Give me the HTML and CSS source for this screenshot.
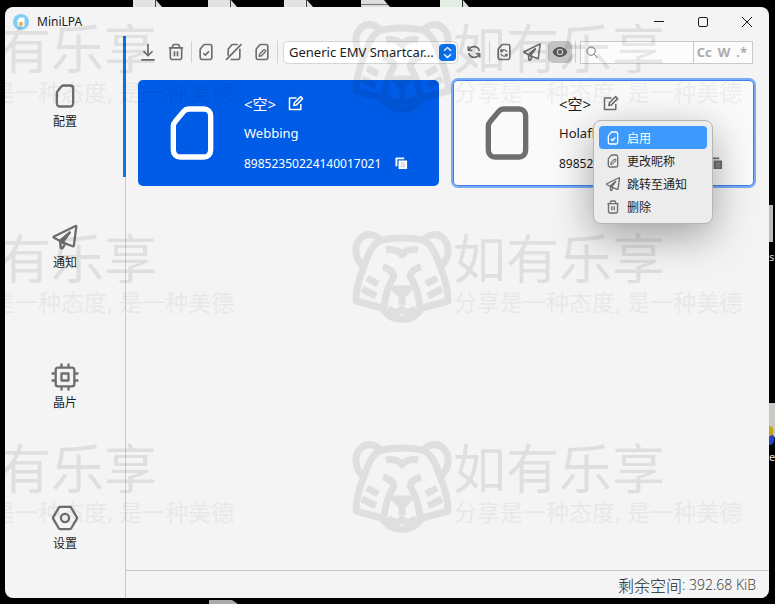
FILE: index.html
```html
<!DOCTYPE html>
<html lang="zh-CN">
<head>
<meta charset="utf-8">
<title>MiniLPA</title>
<link rel="stylesheet" href="styles.css">
</head>
<body>
<svg class="sprite" aria-hidden="true">
  <defs>
    <symbol id="sim" viewBox="0 0 24 24"><path d="M10.600 3H16.500A2.500 2.500 0 0 1 19 5.500V18.500A2.500 2.500 0 0 1 16.500 21H7.500A2.500 2.500 0 0 1 5 18.500V9.400A2.500 2.500 0 0 1 5.700 7.700L8.900 3.900A2.500 2.500 0 0 1 10.600 3Z"/></symbol>
    <symbol id="sim-check" viewBox="0 0 24 24"><use href="#sim"/><path d="M8.800 13.500L11.200 15.800L15.500 11.200"/></symbol>
    <symbol id="sim-off" viewBox="0 0 24 24"><path d="M16.500 3H10.600A2.500 2.500 0 0 0 8.900 3.900L5.700 7.700A2.500 2.500 0 0 0 5 9.400V16.500M8 21H16.500A2.500 2.500 0 0 0 19 18.500V8M2.500 21.500L21 2.500"/></symbol>
    <symbol id="sim-edit" viewBox="0 0 24 24"><use href="#sim"/><path d="M8.500 17.300L9.200 14.300L14 9.500A1.500 1.500 0 0 1 16.100 11.600L11.300 16.500Z" stroke-width="1.600"/></symbol>
    <symbol id="sim-sync" viewBox="0 0 24 24"><use href="#sim"/><path d="M8.300 8.800V11.400H11M8.600 11.200A3.800 3.800 0 0 1 15.500 12M15.700 17.500V14.900H13M15.400 15.100A3.800 3.800 0 0 1 8.500 14.300" stroke-width="1.600"/></symbol>
    <symbol id="sync" viewBox="0 0 24 24"><path d="M3.500 3.500V9.500H9.500M4.200 9.200A8.300 8.300 0 0 1 20 10.500M20.500 20.500V14.500H14.500M19.800 14.800A8.300 8.300 0 0 1 4 13.500" stroke-width="2.600"/></symbol>
    <symbol id="download" viewBox="0 0 24 24"><path d="M12 2V16.500M6.500 11L12 16.500L17.500 11M4 21.500H20"/></symbol>
    <symbol id="trash" viewBox="0 0 24 24"><path d="M3.500 7H20.500M8 6.500V5A2 2 0 0 1 10 3H14A2 2 0 0 1 16 5V6.500M5.200 7V18.500A2.500 2.500 0 0 0 7.700 21H16.300A2.500 2.500 0 0 0 18.800 18.500V7M10.200 11V17M13.800 11V17"/></symbol>
    <symbol id="plane" viewBox="0 0 24 24"><path d="M21 2.600Q21.800 2.200 21.700 3.100L19.600 19.200Q19.400 20.200 18.500 19.900L9.800 16.600L16 8.200L7.800 15.400L2.600 12.700Q1.800 12.100 2.600 11.600Z"/><path d="M7.800 15.400L8.300 21.200Q9.600 22.600 10.600 20.600L12.300 17.500L9.800 16.600L16 8.200Z"/></symbol>
    <symbol id="chip" viewBox="0 0 24 24"><rect x="4" y="4" width="16" height="16" rx="2"/><rect x="9" y="9" width="6" height="6"/><path d="M9 0.500V4M15 0.500V4M9 20V23.500M15 20V23.500M0.500 9H4M0.500 15H4M20 9H23.500M20 15H23.500"/></symbol>
    <symbol id="hex" viewBox="0 0 24 24"><path d="M7.600 2.500H16.400A1 1 0 0 1 17.200 3L22.200 11.500Q22.500 12 22.200 12.500L17.200 21A1 1 0 0 1 16.400 21.500H7.600A1 1 0 0 1 6.800 21L1.800 12.500Q1.500 12 1.800 11.500L6.800 3A1 1 0 0 1 7.600 2.500Z"/><circle cx="12" cy="12" r="3.500"/></symbol>
    <symbol id="edit" viewBox="0 0 16 16"><path d="M8.500 3H1.500V14.500H12.800V9M5.800 10.500L6.400 7.800L12.600 1.600L14.600 3.600L8.400 9.900Z"/></symbol>
    <symbol id="copy" viewBox="0 0 14 14"><path d="M1.500 10V1.500H10" fill="none" stroke-width="2"/><path d="M3.800 3.800H13V13H3.800Z" stroke="none" fill="currentColor"/><path d="M6 6.500H11M6 8.500H11M6 10.500H11" stroke="#aaa" stroke-opacity="0.700" stroke-width="1"/></symbol>
    <symbol id="eye" viewBox="0 0 24 24"><path fill="currentColor" stroke="none" fill-rule="evenodd" d="M12 4.500C6.500 4.500 2.500 8 1 12C2.500 16 6.500 19.500 12 19.500S21.500 16 23 12C21.500 8 17.500 4.500 12 4.500ZM12 17A5 5 0 1 1 12 7A5 5 0 0 1 12 17ZM12 15A3 3 0 1 0 12 9A3 3 0 0 0 12 15Z"/></symbol>
    <symbol id="search" viewBox="0 0 14 14"><circle cx="5.500" cy="5.500" r="4.500"/><path d="M9 9L12.500 13"/></symbol>
    <symbol id="tiger" viewBox="0 0 100 92">
      <path d="M27 10C40 6 60 6 73 10C83 17 85 28 89 38C94 50 96 60 96 70L70 77C61 92 39 92 30 77L4 70C4 60 6 50 11 38C15 28 17 17 27 10ZM13 36C2 30 2 14 8 8C14 1 24 3 29 10M87 36C98 30 98 14 92 8C86 1 76 3 71 10M34 19Q45 17 50 24Q55 17 66 19M31 36Q40 38 42 45Q33 60 32 77M69 36Q60 38 58 45Q67 60 68 77M15 47L26 53M10 58L24 65M85 47L74 53M90 58L76 65M43 58H57L50 65ZM50 65V74M36 77Q45 85 50 78Q55 85 64 77" stroke-width="7"/>
    </symbol>
  </defs>
</svg>

<div class="desktop" aria-hidden="true">
  <i class="file f1"></i><i class="file f2"></i><i class="file f3"></i><i class="file f4"></i><i class="file f5"></i><i class="file f6"></i>
  <i class="edge-file"></i><i class="edge-app"></i>
  <span class="desk-label l1">s</span><span class="desk-label l2">e.</span>
</div>

<div class="window">
  <header class="titlebar">
    <svg class="logo" viewBox="0 0 16 16" aria-hidden="true"><circle cx="8" cy="8" r="8" fill="#86cdf2"/><path d="M7 3.500H10.500A1 1 0 0 1 11.500 4.500V11.500A1 1 0 0 1 10.500 12.500H5.500A1 1 0 0 1 4.500 11.500V6Z" fill="#fff"/><rect x="6" y="8" width="4" height="3.500" fill="#e8bd62"/></svg>
    <h1>MiniLPA</h1>
    <div class="caption">
      <button aria-label="最小化"><svg viewBox="0 0 12 12"><path d="M1 5.500H11"/></svg></button>
      <button aria-label="最大化"><svg viewBox="0 0 12 12"><rect x="1.500" y="1.500" width="9" height="9" rx="1.500"/></svg></button>
      <button aria-label="关闭"><svg viewBox="0 0 12 12"><path d="M1 1L11 11M11 1L1 11"/></svg></button>
    </div>
  </header>

  <div class="body">
    <nav class="sidebar">
      <button class="tab selected"><svg><use href="#sim"/></svg>配置</button>
      <button class="tab"><svg><use href="#plane"/></svg>通知</button>
      <button class="tab"><svg><use href="#chip"/></svg>晶片</button>
      <button class="tab"><svg><use href="#hex"/></svg>设置</button>
    </nav>

    <main>
      <div class="toolbar">
        <button class="tool" aria-label="下载"><svg><use href="#download"/></svg></button>
        <button class="tool" aria-label="删除"><svg><use href="#trash"/></svg></button>
        <span class="sep"></span>
        <button class="tool" aria-label="启用"><svg><use href="#sim-check"/></svg></button>
        <button class="tool" aria-label="禁用"><svg><use href="#sim-off"/></svg></button>
        <button class="tool" aria-label="更改昵称"><svg><use href="#sim-edit"/></svg></button>
        <span class="sep"></span>
        <div class="picker">
          <select aria-label="读卡器"><option>Generic EMV Smartcar...</option></select>
          <svg viewBox="0 0 17 17" aria-hidden="true"><rect width="17" height="17" rx="4" fill="#0a76f2"/><path d="M5 6.800L8.500 3.500L12 6.800M5 10.200L8.500 13.500L12 10.200" fill="none" stroke="#fff" stroke-width="1.500"/></svg>
        </div>
        <button class="tool" aria-label="刷新"><svg class="small"><use href="#sync"/></svg></button>
        <span class="sep"></span>
        <button class="tool" aria-label="刷新配置"><svg><use href="#sim-sync"/></svg></button>
        <button class="tool" aria-label="跳转至通知"><svg><use href="#plane"/></svg></button>
        <button class="tool pressed" aria-label="显示"><svg class="small"><use href="#eye"/></svg></button>
        <span class="sep"></span>
        <div class="search">
          <svg aria-hidden="true"><use href="#search"/></svg>
          <input type="text" aria-label="搜索">
          <button class="match">Cc</button><button>W</button><button>.*</button>
        </div>
      </div>

      <section class="cards">
        <article class="card enabled">
          <svg class="card-icon"><use href="#sim"/></svg>
          <div class="info">
            <div class="row nick"><span>&lt;空&gt;</span><button aria-label="编辑"><svg><use href="#edit"/></svg></button></div>
            <div class="row">Webbing</div>
            <div class="row iccid"><span>89852350224140017021</span><button aria-label="复制"><svg><use href="#copy"/></svg></button></div>
          </div>
        </article>
        <article class="card focused">
          <svg class="card-icon"><use href="#sim"/></svg>
          <div class="info">
            <div class="row nick"><span>&lt;空&gt;</span><button aria-label="编辑"><svg><use href="#edit"/></svg></button></div>
            <div class="row">Holafly</div>
            <div class="row iccid"><span>89852350224140017021</span><button aria-label="复制"><svg><use href="#copy"/></svg></button></div>
          </div>
          <div class="menu" role="menu">
            <button role="menuitem" class="active"><svg><use href="#sim-check"/></svg>启用</button>
            <button role="menuitem"><svg><use href="#sim-edit"/></svg>更改昵称</button>
            <button role="menuitem"><svg><use href="#plane"/></svg>跳转至通知</button>
            <button role="menuitem"><svg><use href="#trash"/></svg>删除</button>
          </div>
        </article>
      </section>

      <footer class="status"><span class="status-label">剩余空间</span>: 392.68 KiB</footer>
    </main>
  </div>

  <div class="watermarks" aria-hidden="true">
    <div class="mark"><svg><use href="#tiger"/></svg><div><b>如有乐享</b><p>分享是一种态度, 是一种美德</p></div></div>
    <div class="mark"><svg><use href="#tiger"/></svg><div><b>如有乐享</b><p>分享是一种态度, 是一种美德</p></div></div>
    <div class="mark"><svg><use href="#tiger"/></svg><div><b>如有乐享</b><p>分享是一种态度, 是一种美德</p></div></div>
    <div class="mark"><svg><use href="#tiger"/></svg><div><b>如有乐享</b><p>分享是一种态度, 是一种美德</p></div></div>
    <div class="mark"><svg><use href="#tiger"/></svg><div><b>如有乐享</b><p>分享是一种态度, 是一种美德</p></div></div>
    <div class="mark"><svg><use href="#tiger"/></svg><div><b>如有乐享</b><p>分享是一种态度, 是一种美德</p></div></div>
  </div>
</div>
</body>
</html>
```
FILE: styles.css
```css
* { box-sizing: border-box; }

body {
  margin: 0;
  min-height: 100vh;
  padding: 7px 6px 6px 5px;
  display: flex;
  background: #000;
  color: #1c1c1c;
  font-family: "Noto Sans", "Noto Sans CJK SC", sans-serif;
  font-size: 13px;
  overflow: hidden;
}

button {
  border: 0;
  padding: 0;
  background: none;
  color: inherit;
  font: inherit;
}

svg {
  display: block;
  flex: none;
  fill: none;
  stroke: currentColor;
  stroke-width: 2;
  stroke-linejoin: round;
}

.sprite { position: absolute; width: 0; height: 0; }

/* Desktop icons peeking out around the window */
.desktop { position: absolute; inset: 0; overflow: hidden; }
.file {
  position: absolute;
  top: 0;
  width: 29px;
  height: 7px;
  background: linear-gradient(90deg, #e2e2e2 22px, #444 22px, #444 23px, #ddd 23px);
  clip-path: polygon(0 0, 23px 0, 100% 100%, 0 100%);
}
.f1 { left: 133px; }
.f2 { left: 208px; }
.f3 { left: 284px; }
.f4 { left: 361px; background: linear-gradient(#ddd 4px, #777 4px, #777 5px, #ddd 5px); }
.f5 { left: 440px; background: linear-gradient(90deg, #e2eee4 22px, #222 22px, #222 23px, #ddd 23px); }
.f6 { left: 209px; top: auto; bottom: 0; height: 4px; background: #aaa; }
.edge-file { position: absolute; left: 768px; top: 205px; width: 5px; height: 37px; background: #bbb; }
.edge-app { position: absolute; left: 768px; top: 403px; width: 7px; height: 42px; background: radial-gradient(circle at 0 28px, #c9a312 5px, transparent 6px), radial-gradient(circle at 0 36px, #2345c0 6px, transparent 7px), linear-gradient(#c9c9c4 34px, #000 34px); }
.desk-label { position: absolute; left: 769px; color: #ddd; font-size: 11px; line-height: 14px; }
.l1 { top: 250px; }
.l2 { top: 450px; }

.window {
  position: relative;
  flex: 1;
  display: flex;
  flex-direction: column;
  background: #f4f4f4;
  border-radius: 8px;
  overflow: hidden;
}

.titlebar {
  display: flex;
  align-items: center;
  height: 29px;
  padding-left: 8px;
}
.logo { width: 16px; height: 16px; stroke: none; }
.titlebar h1 { margin: 0 0 0 8px; font-size: 12px; font-weight: 400; }
.caption { display: flex; margin-left: auto; }
.caption button { width: 44px; height: 28px; display: grid; place-items: center; }
.caption svg { width: 12px; height: 12px; stroke-width: 1; }

.body { flex: 1; display: flex; }

.sidebar {
  width: 121px;
  display: flex;
  flex-direction: column;
  border-right: 1px solid #c9c9c9;
}
.tab {
  flex: 1;
  display: flex;
  flex-direction: column;
  align-items: center;
  justify-content: center;
  gap: 4px;
  margin-right: -1px;
  font-size: 12px;
  line-height: 16px;
  border-right: 3px solid transparent;
  border-left: 2px solid transparent;
}
.tab.selected { border-right-color: #0a73ee; }
.tab svg { width: 28px; height: 28px; color: #6e6e6e; }

main { flex: 1; min-width: 0; display: flex; flex-direction: column; }

.toolbar {
  display: flex;
  align-items: center;
  gap: 4px;
  height: 32px;
  padding: 0 16px 0 10px;
}
.tool {
  width: 24px;
  height: 22px;
  display: grid;
  place-items: center;
  border-radius: 5px;
  color: #6e6e6e;
}
.tool svg { width: 20px; height: 20px; }
.tool svg.small { width: 16px; height: 16px; }
.tool.pressed { background: #c4c4c4; color: #555; }
.sep { width: 1px; height: 22px; margin: 0 -2px 0 -1px; background: #d0d0d0; }

.picker { position: relative; width: 175px; margin-left: 3px; }
.picker select {
  appearance: none;
  display: block;
  width: 100%;
  height: 23px;
  padding: 0 19px 0 5px;
  border: 1px solid #d6d6d6;
  border-radius: 5px;
  background: #fff;
  color: #1c1c1c;
  font: inherit;
}
.picker svg { position: absolute; right: 2px; top: 3px; width: 17px; height: 17px; stroke: none; pointer-events: none; }

.search {
  flex: 1;
  min-width: 0;
  display: flex;
  align-items: center;
  height: 23px;
  margin-left: 2px;
  padding: 0 2px 0 5px;
  border: 1px solid #c9c9c9;
  background: #fcfcfc;
}
.search svg { width: 13px; height: 13px; color: #6e6e6e; stroke-width: 1; }
.search input { flex: 1; min-width: 0; border: 0; background: none; outline: 0; font: inherit; }
.search button { height: 21px; padding: 0 3px; color: #ababab; font-weight: 700; }
.search .match { border-left: 1px solid #c9c9c9; }

.cards {
  flex: 1;
  display: grid;
  grid-template-columns: 1fr 1fr;
  align-content: start;
  gap: 14px;
  padding: 12px 15px 12px 12px;
}
.card {
  position: relative;
  display: flex;
  align-items: center;
  gap: 20px;
  height: 106px;
  padding-left: 22px;
  border-radius: 5px;
  background: #fafafa;
}
.card-icon { width: 64px; height: 64px; color: #6e6e6e; }
.card.enabled { background: #005ce6; color: #fff; }
.card.enabled .card-icon { color: #fff; }
.card.focused { box-shadow: inset 0 0 0 1px #3f80e8, 0 0 0 2px #7aabf7; }
.row { display: flex; align-items: center; height: 30px; }
.row svg { width: 16px; height: 16px; color: #6e6e6e; }
.nick { gap: 12px; font-size: 15px; }
.nick svg { stroke-width: 1.5; }
.iccid { gap: 14px; font-size: 12px; }
.iccid svg { width: 13px; height: 13px; }
.enabled .row svg { color: #fff; }

.menu {
  position: absolute;
  left: 140px;
  top: 40px;
  z-index: 5;
  width: 120px;
  padding: 5px;
  border: 1px solid #b5b5b5;
  border-radius: 8px;
  background: #ececec;
  box-shadow: 0 12px 40px rgba(0, 0, 0, .35);
}
.menu button {
  display: flex;
  align-items: center;
  gap: 6px;
  width: 100%;
  height: 23px;
  padding-left: 6px;
  border-radius: 4px;
  font-size: 12px;
}
.menu svg { width: 16px; height: 16px; color: #6e6e6e; }
.menu .active { background: #3d99fc; color: #fff; }
.menu .active svg { color: #fff; }

.status {
  display: flex;
  align-items: center;
  justify-content: flex-end;
  height: 28px;
  padding-right: 13px;
  border-top: 1px solid #c9c9c9;
  color: #333;
  font-family: "Open Sans", "Noto Sans", "Noto Sans CJK SC", sans-serif;
  font-size: 14px;
  font-weight: 300;
  white-space: pre;
}
.status-label { font-size: 16px; color: #1c1c1c; }

/* Tiled watermark laid over the whole window */
.watermarks {
  position: absolute;
  left: -161px;
  top: 14px;
  z-index: 3;
  display: grid;
  grid-template-columns: 508px 508px;
  grid-auto-rows: 210px;
  color: #000;
  pointer-events: none;
}
.mark { display: flex; align-items: flex-start; gap: 1px; opacity: .08; }
.mark svg { width: 100px; height: 92px; }
.mark b { display: block; font-size: 53px; line-height: 56px; font-weight: 400; white-space: nowrap; }
.mark p { margin: 0; padding-left: 1px; font-size: 23px; line-height: 30px; font-weight: 400; opacity: .6; white-space: nowrap; }
```
